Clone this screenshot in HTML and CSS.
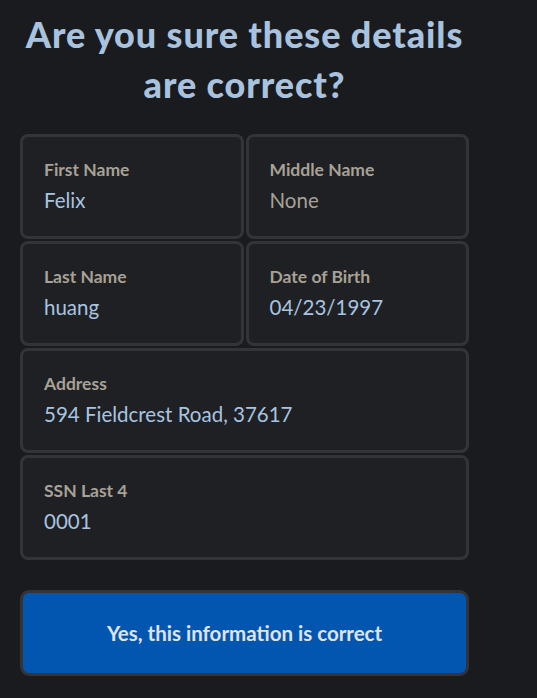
FILE: index.html
```html
<!DOCTYPE html>
<html>
<head>
<meta charset="utf-8">
<link rel="stylesheet" href="styles.css">
</head>
<body>
<main class="confirm">
  <h1 class="title">Are you sure these details are correct?</h1>
  <section class="grid">
    <div class="card"><div class="label">First Name</div><div class="value">Felix</div></div>
    <div class="card"><div class="label">Middle Name</div><div class="value muted">None</div></div>
    <div class="card"><div class="label">Last Name</div><div class="value">huang</div></div>
    <div class="card"><div class="label">Date of Birth</div><div class="value">04/23/1997</div></div>
    <div class="card wide"><div class="label">Address</div><div class="value">594 Fieldcrest Road, 37617</div></div>
    <div class="card wide"><div class="label">SSN Last 4</div><div class="value">0001</div></div>
  </section>
  <button class="confirm-btn">Yes, this information is correct</button>
</main>
</body>
</html>
```

FILE: styles.css
```css
html, body {
  margin: 0;
  padding: 0;
  background: #1a1b1e;
}
body {
  font-family: Lato, "Liberation Sans", sans-serif;
}
.confirm {
  width: 449px;
  margin-left: 20px;
  padding-top: 9px;
}
.title {
  margin: 0 0 25px;
  text-align: center;
  font-family: Lato, sans-serif;
  font-weight: 900;
  font-size: 36px;
  line-height: 50px;
  letter-spacing: 0.9px;
  color: #a9c2de;
}
.grid {
  display: grid;
  grid-template-columns: 1fr 1fr;
  gap: 2px;
}
.card {
  box-sizing: border-box;
  height: 105px;
  border: 3px solid #333438;
  border-radius: 8px;
  background: #1f2023;
  padding: 22px 21px 0;
}
.wide {
  grid-column: 1 / 3;
}
.label {
  font-size: 17.5px;
  font-weight: 700;
  line-height: 22px;
  color: #a8a196;
}
.value {
  margin-top: 7px;
  font-size: 20.5px;
  line-height: 24px;
  color: #a9c4e0;
}
.value.muted {
  color: #a8a196;
}
.confirm-btn {
  display: block;
  box-sizing: border-box;
  width: 100%;
  height: 86px;
  margin-top: 30px;
  border: 3px solid #333438;
  border-radius: 9px;
  background: #0256b0;
  color: #e0e3e8;
  font-family: Lato, sans-serif;
  font-weight: 700;
  font-size: 20.5px;
}
```
